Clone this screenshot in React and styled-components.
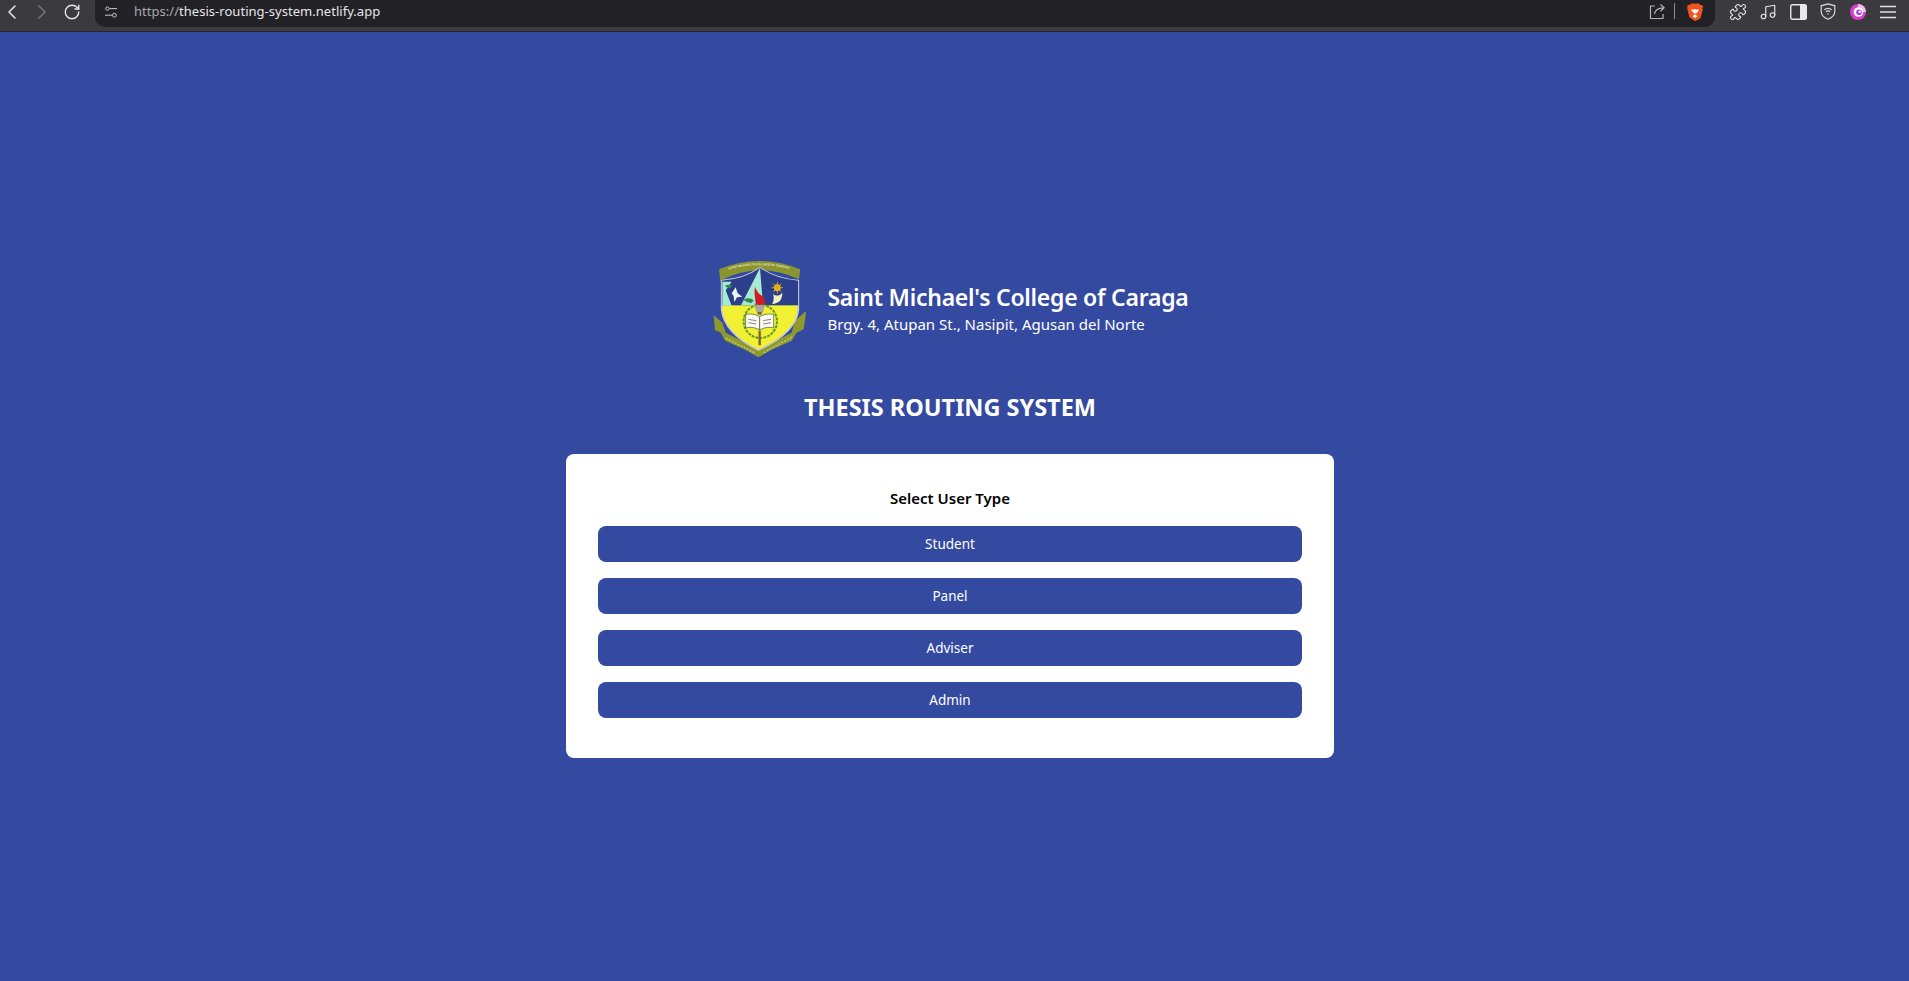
import React from 'react';
import styled, { createGlobalStyle } from 'styled-components';
import { ChevronLeft, ChevronRight, RotateCw, Puzzle, Music } from 'lucide-react';

const BLUE = '#3449a0';
const FONT = '"Noto Sans", "Open Sans", sans-serif';

const Global = createGlobalStyle`
  html, body { margin: 0; padding: 0; background: ${BLUE}; }
  * { box-sizing: border-box; }
  body { font-family: ${FONT}; overflow: hidden; }
`;

const Page = styled.div`
  width: 1909px;
  height: 981px;
  display: flex;
  flex-direction: column;
  background: ${BLUE};
`;

const Toolbar = styled.header`
  height: 32px;
  display: flex;
  align-items: flex-start;
  background: #3a3a3f;
  border-bottom: 1px solid #26272b;
  padding-right: 6px;
`;

const NavGroup = styled.nav`
  display: flex;
  gap: 6px;
  margin-right: 11px;
`;

const Slot = styled.span`
  width: ${(p) => p.$w || 30}px;
  height: 23px;
  display: flex;
  align-items: center;
  justify-content: center;
  color: ${(p) => p.$color || '#e8e8ea'};
  flex: none;
`;

const AddressBar = styled.div`
  flex: 1;
  height: 27px;
  display: flex;
  align-items: flex-start;
  background: #212126;
  border-radius: 0 0 10px 10px;
  padding: 0 12px 0 10px;
  margin-right: 8px;
`;

const SiteIcon = styled.span`
  width: 12px;
  height: 23px;
  margin-right: 17px;
  display: flex;
  align-items: center;
  color: #c8c8cc;
`;

const Url = styled.div`
  flex: 1;
  font-size: 13px;
  line-height: 23px;
  color: #e6e6e8;
  letter-spacing: 0.03px;
  white-space: nowrap;
`;

const Scheme = styled.span`
  color: #a9a9ae;
`;

const Separator = styled.span`
  width: 1px;
  height: 16px;
  margin: 3px 12px 0 8px;
  background: #8b8b90;
`;

const Main = styled.main`
  flex: 1;
  display: flex;
  flex-direction: column;
  align-items: center;
  padding: 226px 9px 0 0;
`;

const Brand = styled.div`
  display: flex;
  align-items: center;
  gap: 21px;
  height: 100px;
  padding-left: 2px;
  color: #fff;
`;

const BrandText = styled.div`
  display: flex;
  flex-direction: column;
`;

const School = styled.h1`
  margin: 0;
  font-size: 23px;
  line-height: 32px;
  font-weight: 600;
  letter-spacing: -0.25px;
  white-space: nowrap;
`;

const Address = styled.p`
  margin: 0;
  font-size: 15px;
  line-height: 22px;
  white-space: nowrap;
`;

const SystemTitle = styled.h2`
  margin: 33px 0 0;
  font-size: 23.5px;
  line-height: 32px;
  font-weight: 700;
  color: #fff;
`;

const Card = styled.section`
  width: 768px;
  margin-top: 31px;
  padding: 32px 32px 40px;
  background: #fff;
  border-radius: 8px;
`;

const CardTitle = styled.h3`
  margin: 0 0 16px;
  font-size: 15px;
  line-height: 24px;
  font-weight: 600;
  color: #000;
  text-align: center;
`;

const ButtonList = styled.div`
  display: flex;
  flex-direction: column;
  gap: 16px;
`;

const RoleButton = styled.button`
  height: 36px;
  border: 0;
  border-radius: 8px;
  background: ${BLUE};
  color: #fff;
  font-family: ${FONT};
  font-size: 13.5px;
  cursor: pointer;
`;

const Sliders = () => (
  <svg width="12" height="12" viewBox="0 0 12 12" fill="none" stroke="currentColor" strokeWidth="1">
    <circle cx="2.4" cy="2.6" r="1.7" />
    <path d="M4.5 2.6H12M0 9.2h7.2" />
    <circle cx="9.4" cy="9.2" r="1.9" />
  </svg>
);

const Share = () => (
  <svg width="17" height="17" viewBox="0 0 17 17" fill="none" stroke="#b4b4b8" strokeWidth="1.2">
    <path d="M6 3H1.500v12.500h12.500V11" />
    <path d="M5.500 11c.5-4 3-6 9-6.200M11.500 1.500l3.600 3.300-3.600 3.400" />
  </svg>
);

const BraveLogo = () => (
  <svg width="16" height="18" viewBox="0 0 16 18">
    <path d="M4 .6h8l1.300 1.500 1.900-.2.8 2-.6 1.400.4 1.500-2 7.400c-.3 1-.9 1.500-1.700 2L8 18l-4.100-2.800c-.8-.5-1.400-1-1.700-2L.2 5.800.6 4.300 0 3.900.8 1.900l1.900.2z" fill="#f0531f" />
    <path d="M8 11.500l-2.600 1.700L8 15l2.600-1.800zM3.800 6.300l2.700.5 1.500-.7 1.500.7 2.700-.5-1.400 2.800-1.600 1.500L8 10.400l-.7.2-1.600-1.500z" fill="#fff" />
  </svg>
);

const SidePanel = () => (
  <svg width="17" height="16" viewBox="0 0 17 16">
    <rect x=".75" y=".75" width="15.500" height="14.500" rx="1.500" fill="none" stroke="#e8e8ea" strokeWidth="1.400" />
    <rect x="10" y="1" width="6.500" height="14" fill="#e8e8ea" />
  </svg>
);

const ShieldWifi = () => (
  <svg width="16" height="17" viewBox="0 0 16 17" fill="none" stroke="#dcdcde" strokeWidth="1.200">
    <path d="M8 .8l6.800 2v5.400c0 3.800-3 6.500-6.800 8-3.800-1.500-6.800-4.200-6.800-8V2.800z" />
    <path d="M4.300 6.800c2.200-1.800 5.200-1.800 7.400 0M5.800 8.800c1.300-1 3.100-1 4.400 0" />
    <circle cx="8" cy="11" r=".8" fill="#dcdcde" stroke="none" />
  </svg>
);

const Swirl = () => (
  <svg width="16" height="16" viewBox="0 0 16 16">
    <circle cx="8" cy="8" r="8" fill="#d63fd0" />
    <path d="M8 0a8 8 0 0 1 8 8H8z" fill="#f3b8ec" />
    <circle cx="8.500" cy="8" r="4.800" fill="#fff" />
    <circle cx="9" cy="8.200" r="2.800" fill="#a23fe0" />
    <circle cx="9.800" cy="7.800" r="1.300" fill="#fff" />
  </svg>
);

const Menu = () => (
  <svg width="16" height="14" viewBox="0 0 16 14" stroke="#e0e0e2" strokeWidth="1.400">
    <path d="M0 1.500h16M0 7h16M0 12.500h16" />
  </svg>
);

const SHIELD = 'M68 92Q135 88 183 54Q232 88 298 92V180Q290 250 178 300Q76 250 68 180Z';

const Crest = () => (
  <svg width="93" height="98" viewBox="42 27 279 294">
    <defs>
      <path id="crestArc" d="M74 63Q180 28 292 63" />
      <clipPath id="shieldClip">
        <path d={SHIELD} />
      </clipPath>
    </defs>
    <path d="M44 196l26 22 10 30 100 50 98-50 10-36 34-30-8 56-22 10-14 24-62 28-38 22-38-22-62-28-12-24-18-8z" fill="#8f9a2c" />
    <path d="M166 308l-86-44" fill="none" stroke="#dde0a0" strokeWidth="5" strokeDasharray="6 4" opacity=".6" />
    <path d="M194 308l84-46" fill="none" stroke="#dde0a0" strokeWidth="5" strokeDasharray="6 4" opacity=".6" />
    <path d="M60 58Q180 8 304 58l-4 30Q180 32 64 92z" fill="#8b9530" />
    <text fontSize="9" fontWeight="700" fontFamily="Liberation Sans, sans-serif" fill="#e8e8c8">
      <textPath href="#crestArc" startOffset="16">SAINT MICHAEL'S COLLEGE OF CARAGA</textPath>
    </text>
    <path d={SHIELD} fill="#f2f032" stroke="#c9ccd6" strokeWidth="5" />
    <g clipPath="url(#shieldClip)">
      <rect x="60" y="50" width="245" height="116" fill="#2b3f8d" />
      <path d="M183 54L126 166H192z" fill="#a6ead2" />
      <path d="M70 95h28l-18 26 18 46H70z" fill="#a6ead2" />
      <path d="M98 130l12-18 6 18 14 10-16 2-8 14-2-18z" fill="#eef4f4" />
      <path d="M134 150c8-8 24-6 30 2l-8 8c-8-4-16-4-22-10z" fill="#2d8a55" />
      <path d="M78 108c6-6 18-4 22 0l-8 6c-6-2-10-2-14-6z" fill="#2d8a55" />
      <path d="M222 132c8 6 18 8 28-4 0 14-4 26-16 30-6 2-10 4-14 4 4-10 6-20 2-30z" fill="#f5efc6" />
      <circle cx="235" cy="113" r="10" fill="#f3c71e" />
      <path d="M235 96v34M218 113h34M223 101l24 24M247 101l-24 24" stroke="#d9a714" strokeWidth="3" />
      <circle cx="184" cy="214" r="50" fill="none" stroke="#5f9a2a" strokeWidth="6" strokeDasharray="9 3" />
      <path d="M168 110c-4 22 2 34 2 54h26c6-14-2-24-12-30-8-6-12-14-16-24z" fill="#cf1c24" />
      <path d="M166 166h32l-6 20h-20z" fill="#a9a9a2" />
      <path d="M174 186h16l-3 8h-10z" fill="#6d6d5a" />
      <path d="M140 194c14-4 28-2 42 6v40c-14-8-28-10-42-6z" fill="#fbfbf4" stroke="#3d4c45" strokeWidth="2" />
      <path d="M224 194c-14-4-28-2-42 6v40c14-8 28-10 42-6z" fill="#fbfbf4" stroke="#3d4c45" strokeWidth="2" />
      <path d="M148 208l24 4M148 218l24 4M192 212l24-4M192 222l24-4" stroke="#4b4b42" strokeWidth="2" />
      <path d="M182 242v44" stroke="#75622b" strokeWidth="7" />
    </g>
  </svg>
);

const roles = ['Student', 'Panel', 'Adviser', 'Admin'];

export default function App() {
  return (
    <Page>
      <Global />
      <Toolbar>
        <NavGroup>
          <Slot $w={24}><ChevronLeft size={24} strokeWidth={1.5} /></Slot>
          <Slot $w={24} $color="#77777c"><ChevronRight size={24} strokeWidth={1.5} /></Slot>
          <Slot $w={24}><RotateCw size={18} strokeWidth={1.8} /></Slot>
        </NavGroup>
        <AddressBar>
          <SiteIcon><Sliders /></SiteIcon>
          <Url><Scheme>https://</Scheme>thesis-routing-system.netlify.app</Url>
          <Slot $w={17}><Share /></Slot>
          <Separator />
          <Slot $w={16}><BraveLogo /></Slot>
        </AddressBar>
        <Slot><Puzzle size={18} strokeWidth={1.5} /></Slot>
        <Slot><Music size={18} strokeWidth={1.5} /></Slot>
        <Slot><SidePanel /></Slot>
        <Slot><ShieldWifi /></Slot>
        <Slot><Swirl /></Slot>
        <Slot><Menu /></Slot>
      </Toolbar>
      <Main>
        <Brand>
          <Crest />
          <BrandText>
            <School>Saint Michael's College of Caraga</School>
            <Address>Brgy. 4, Atupan St., Nasipit, Agusan del Norte</Address>
          </BrandText>
        </Brand>
        <SystemTitle>THESIS ROUTING SYSTEM</SystemTitle>
        <Card>
          <CardTitle>Select User Type</CardTitle>
          <ButtonList>
            {roles.map((r) => (
              <RoleButton key={r}>{r}</RoleButton>
            ))}
          </ButtonList>
        </Card>
      </Main>
    </Page>
  );
}
